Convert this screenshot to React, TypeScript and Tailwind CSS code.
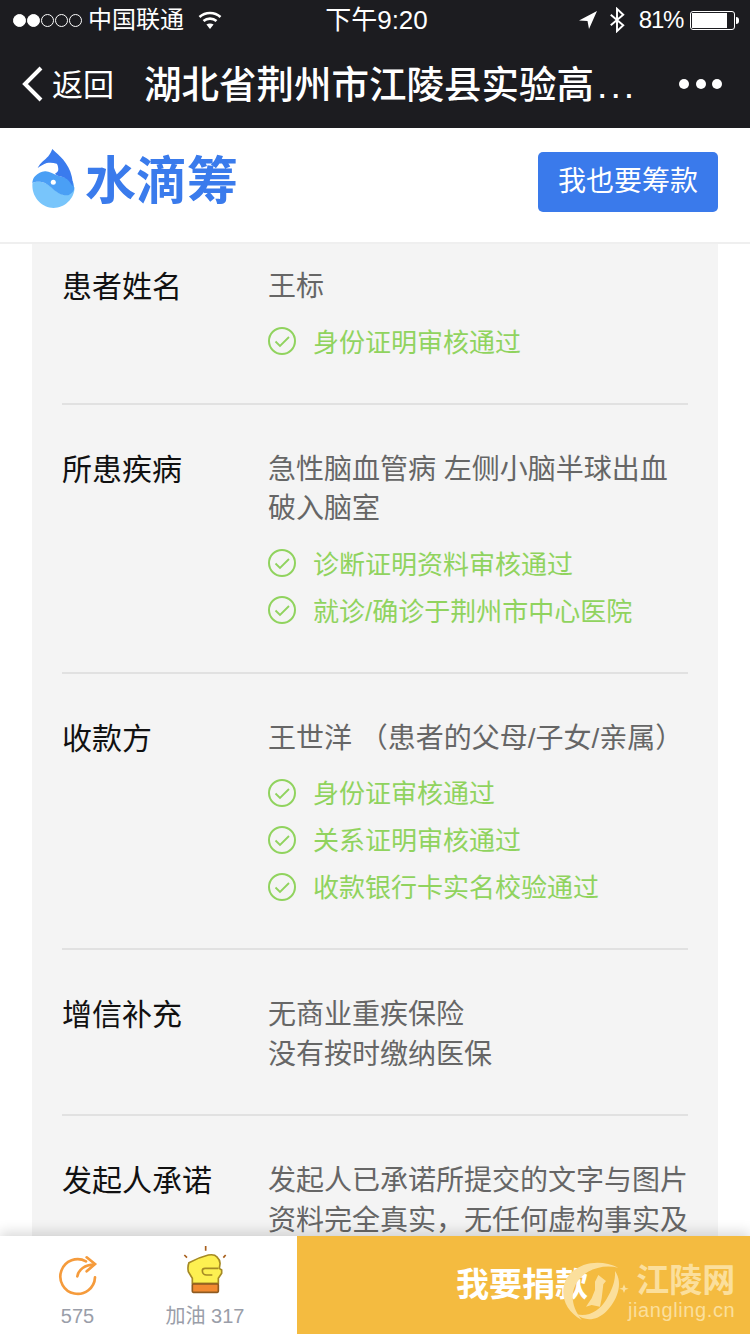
const cjk = "font-['Liberation_Sans','Noto_Sans_CJK_SC',sans-serif]";

function CheckCircle() {
  return (
    <svg width="28" height="28" viewBox="0 0 28 28" fill="none" className="mb-[4px] shrink-0">
      <circle cx="14" cy="14" r="13" stroke="#90d35e" strokeWidth="2" />
      <path d="M7.5 14.5l4.500 4.500 9-9" stroke="#90d35e" strokeWidth="1.800" />
    </svg>
  );
}

function StatusBar() {
  return (
    <div className="flex h-10 items-center justify-between pl-[13px] pr-[11px] text-white">
      <div className="flex w-[300px] items-center">
        <div className="flex items-center gap-[1px]">
          <span className="size-[13px] rounded-full border border-white bg-white" />
          <span className="size-[13px] rounded-full border border-white bg-white" />
          <span className="size-[13px] rounded-full border border-white" />
          <span className="size-[13px] rounded-full border border-white" />
          <span className="size-[13px] rounded-full border border-white" />
        </div>
        <span className="ml-[6px] text-[24px] leading-none">中国联通</span>
        <svg width="24" height="20" viewBox="0 0 24 20" fill="none" stroke="#fff" strokeWidth="2.600" className="ml-[14px]">
          <path d="M1.500 7C7.500 1.600 16.500 1.600 22.500 7" />
          <path d="M5.500 11C9.200 7.800 14.800 7.800 18.500 11" />
          <path d="M12 19l-3.600-4.400c2.100-1.600 5.100-1.600 7.200 0z" fill="#fff" stroke="none" />
        </svg>
      </div>
      <span className="ml-[1px] text-[26px] leading-none">下午9:20</span>
      <div className="flex w-[300px] items-center justify-end">
        <svg width="18" height="18" viewBox="0 0 18 18" fill="#fff">
          <path d="M18 0L0 9.500l8.500.5L10 18z" />
        </svg>
        <svg width="16" height="26" viewBox="0 0 18 28" fill="none" stroke="#fff" strokeWidth="2.200" className="ml-[12px]">
          <path d="M2 8l14 12-7 6.500V1.500L16 8 2 20" />
        </svg>
        <span className="ml-[14px] text-[24px] leading-none tracking-[-1.300px]">81%</span>
        <div className="ml-[7px] flex items-center">
          <div className="h-[19px] w-[45px] rounded-[3px] border border-white p-[1px]">
            <div className="h-full w-[35px] bg-white" />
          </div>
          <div className="ml-[1px] h-[7px] w-[3px] rounded-r-full bg-white" />
        </div>
      </div>
    </div>
  );
}

function NavBar() {
  return (
    <div className="flex h-[88px] items-center text-white">
      <svg width="24" height="36" viewBox="0 0 24 36" fill="none" stroke="#fff" strokeWidth="4" className="ml-[21px] shrink-0">
        <path d="M20 2L4 18l16 16" />
      </svg>
      <span className="ml-[7px] mt-[2px] w-[62px] shrink-0 whitespace-nowrap text-[31px] leading-none">返回</span>
      <div className="ml-[30px] mt-[4px] w-[490px] whitespace-nowrap text-[37.500px] font-medium leading-none">
        湖北省荆州市江陵县实验高<span className="ml-[3px] tracking-[3px]">...</span>
      </div>
      <div className="ml-[45px] flex gap-[6.500px]">
        <span className="size-[10px] rounded-full bg-white" />
        <span className="size-[10px] rounded-full bg-white" />
        <span className="size-[10px] rounded-full bg-white" />
      </div>
    </div>
  );
}

function Logo() {
  return (
    <div className="mb-[2px] flex items-center">
      <svg width="44" height="60" viewBox="0 0 44 60" className="mb-[4px]">
        <path d="M0.500 34C-1 48 10 59 21.500 59S43 49 42.500 38L36 46C26 47 20 37 13 34 9 32.500 4 32 0.500 34z" fill="#78c5fb" />
        <path d="M0.300 34C0.500 31 1.500 29 3 27.300 6 24 9 22.800 13 22.300 17 22 21 25 24.700 26.300 28 27.500 31 28 34.700 29 37 30 39.500 31 40.700 32.300 41.800 35 42.300 38 42 40.700 41 43 38.500 45 36.300 46.300 32 46.500 29 45.500 26.300 44 21 41 18 36.500 13 34 9 32.500 4 32 0.300 34z" fill="#4a9ff5" />
        <path d="M5.700 19C8 14 13 11 16.300 7.300 18 5 19.500 2.500 20.300 0 24 3.500 28 7 31.300 10.700 35 15.500 38.500 21 39.700 27.300 40.500 31 41 34 40.700 37.300 38 33 36 30.500 33 29 30 27.500 27 27.500 24.700 26.300L23 24.700C25 23.500 26.500 22 26.300 20 26 17 25.500 15.500 24.700 14.700 21 13.500 18 13.500 14.700 14 11.500 15 8.500 17 5.700 19z" fill="#3a7bee" />
        <circle cx="21.300" cy="33.300" r="2.500" fill="#fff" />
      </svg>
      <span className="ml-[9px] text-[51px] font-bold leading-none text-[#3a7bec]">水滴筹</span>
    </div>
  );
}

function Header() {
  return (
    <div className="flex h-[116px] items-center justify-between border-b-2 border-[#efefef] bg-white pb-[6px] pl-[32px] pr-[32px]">
      <Logo />
      <div className="flex h-[60px] w-[180px] items-center justify-center rounded-[5px] bg-[#3a7aeb] text-[28px] text-white">
        我也要筹款
      </div>
    </div>
  );
}

interface InfoRowProps {
  label: string;
  lines: string[];
  checks?: string[];
  last?: boolean;
}

function InfoRow({ label, lines, checks, last }: InfoRowProps) {
  const rowClass = last
    ? "flex pt-[45px]"
    : checks
      ? "flex border-b-2 border-[#e1e1e1] pt-[45px] pb-[36px]"
      : "flex border-b-2 border-[#e1e1e1] pt-[45px] pb-[40px]";
  return (
    <div className={rowClass}>
      <div className="w-[206px] shrink-0 text-[30px] leading-[40px] text-[#111]">{label}</div>
      <div className="min-w-0 flex-1">
        {lines.map((line) => (
          <div key={line} className="whitespace-nowrap text-[28px] leading-[39.500px] text-[#666]">
            {line}
          </div>
        ))}
        {checks && (
          <div className="mt-[13px]">
            {checks.map((check) => (
              <div key={check} className="flex h-[47px] items-center text-[26px] text-[#90d35e]">
                <CheckCircle />
                <span className="ml-[17px] whitespace-nowrap">{check}</span>
              </div>
            ))}
          </div>
        )}
      </div>
    </div>
  );
}

function Watermark() {
  return (
    <div className="pointer-events-none absolute bottom-0 right-0 flex h-[98px] w-[200px] items-end text-[#fbdf9c]">
      <svg width="90" height="79" viewBox="0 0 270 237" fill="currentColor" className="shrink-0">
        <path d="M205 38C150 10 80 22 50 70 28 110 40 165 95 195 60 150 60 105 90 70 120 38 165 28 205 38z" />
        <path d="M195 48C222 85 200 140 168 170 140 197 105 200 80 178 115 188 150 165 168 135 186 105 197 78 195 48z" />
        <path d="M145 60L168 78 160 88 155 130 150 155 125 150 108 155 125 130 135 105 135 80z" />
        <path d="M222 88L226 98 236 101 226 104 222 114 218 104 208 101 218 98z" />
      </svg>
      <div className="mb-[13px] ml-[-12px] flex flex-col items-end">
        <span className="text-[33px] font-bold leading-[36px]">江陵网</span>
        <span className="whitespace-nowrap text-[20px] leading-[22px] tracking-[0.600px]">jiangling.cn</span>
      </div>
    </div>
  );
}

function BottomBar() {
  return (
    <div className="relative flex h-[98px] shrink-0 shadow-[0_-4px_12px_rgba(0,0,0,0.15)]">
      <div className="flex w-[297px] bg-white text-[20px] text-[#9a9ea9]">
        <div className="flex w-[155px] flex-col items-center pt-[12px]">
          <svg width="55" height="55" viewBox="0 0 165 165" fill="none" stroke="#f59b3c" strokeWidth="8" strokeLinecap="round">
            <path d="M108 40A52 52 0 1 0 135 88" />
            <path d="M82 85C85 65 105 50 132 50" />
            <path d="M110 28L135 48 110 70" />
          </svg>
          <span className="mt-[3px] leading-[20px]">575</span>
        </div>
        <div className="flex w-[100px] flex-col items-center pt-[4px]">
          <svg width="60" height="60" viewBox="0 0 180 180" fill="none" strokeWidth="5">
            <path d="M92 18v14M28 45l8 8M152 45l-7 8" stroke="#a85f1c" />
            <path d="M42 68C60 58 80 50 100 45 112 43 122 46 125 50 133 58 136 65 135 72L133 85 140 90V100L130 115V130H52V115L40 95C38 85 39 75 42 68z" fill="#fdf051" stroke="#a58a25" />
            <path d="M130 85H90C84 85 82 88 82 92 82 100 88 105 95 105H112" stroke="#a58a25" />
            <rect x="52" y="132" width="78" height="25" rx="3" fill="#f28a30" stroke="#8e5a20" />
          </svg>
          <span className="mt-[6px] whitespace-nowrap leading-[20px]">加油 317</span>
        </div>
      </div>
      <div className="flex flex-1 items-center bg-[#f4bb40] pl-[159px] text-[33px] font-bold text-white">
        我要捐款
      </div>
      <Watermark />
    </div>
  );
}

export default function App() {
  return (
    <div className={`flex h-[1334px] w-[750px] flex-col overflow-hidden bg-white ${cjk}`}>
      <div className="shrink-0 bg-[#1c1c20]">
        <StatusBar />
        <NavBar />
      </div>
      <Header />
      <div className="min-h-0 flex-1 overflow-hidden">
        <div className="ml-[32px] w-[686px] bg-[#f4f4f4] px-[30px]">
          <div className="-mt-[23px] pt-[1px]">
            <InfoRow label="患者姓名" lines={["王标"]} checks={["身份证明审核通过"]} />
            <InfoRow
              label="所患疾病"
              lines={["急性脑血管病 左侧小脑半球出血", "破入脑室"]}
              checks={["诊断证明资料审核通过", "就诊/确诊于荆州市中心医院"]}
            />
            <InfoRow
              label="收款方"
              lines={["王世洋 （患者的父母/子女/亲属）"]}
              checks={["身份证审核通过", "关系证明审核通过", "收款银行卡实名校验通过"]}
            />
            <InfoRow label="增信补充" lines={["无商业重疾保险", "没有按时缴纳医保"]} />
            <InfoRow
              label="发起人承诺"
              lines={["发起人已承诺所提交的文字与图片", "资料完全真实，无任何虚构事实及"]}
              last
            />
          </div>
        </div>
      </div>
      <BottomBar />
    </div>
  );
}
